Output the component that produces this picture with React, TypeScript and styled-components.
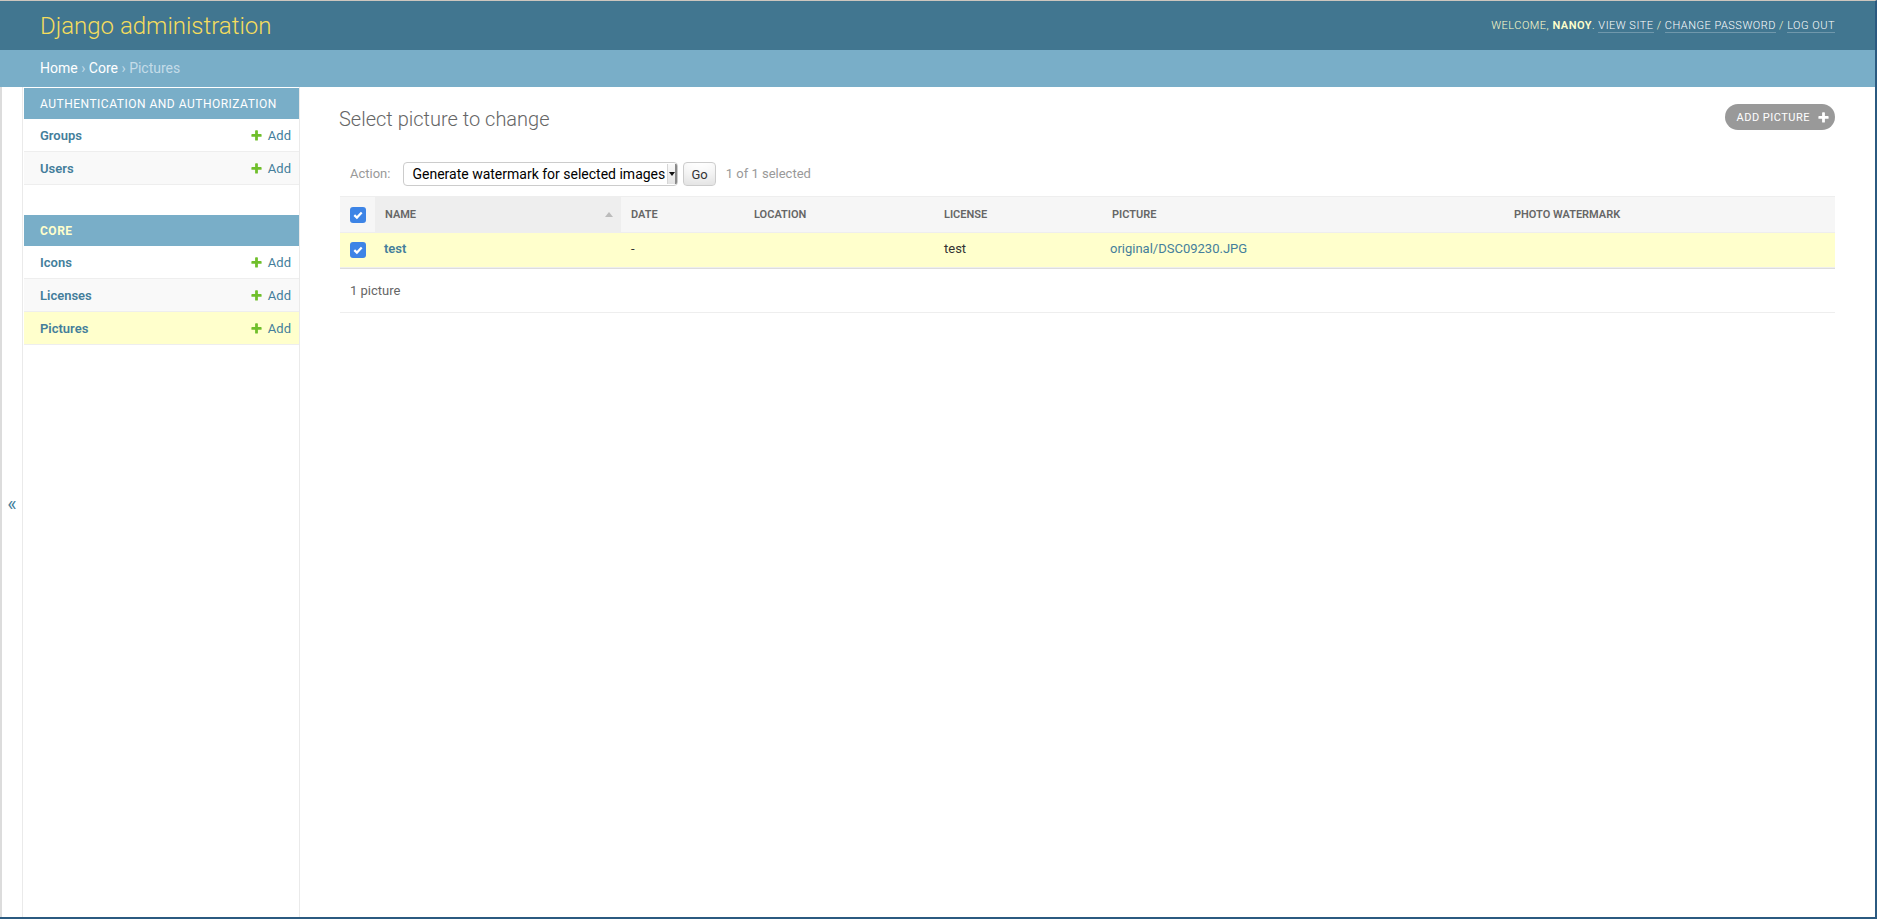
import React from "react";
import styled, { createGlobalStyle } from "styled-components";

const GlobalStyle = createGlobalStyle`
  html, body {
    margin: 0;
    padding: 0;
  }
  body {
    font-family: Roboto, "Lucida Grande", "DejaVu Sans", Verdana, Arial, sans-serif;
    font-size: 14px;
    color: #333;
    background: #fff;
  }
  * {
    box-sizing: border-box;
  }
`;

const Frame = styled.div`
  display: flex;
  flex-direction: column;
  height: 919px;
  border-top: 1px solid #cdc6be;
  border-right: 2px solid #2b5a80;
  border-bottom: 2px solid #2b5a80;
  overflow: hidden;
`;

/* ---------- header ---------- */

const Header = styled.header`
  flex: 0 0 49px;
  display: flex;
  align-items: center;
  justify-content: space-between;
  padding: 0 40px;
  background: #417690;
  color: #ffc;
`;

const Branding = styled.h1`
  margin: 0;
  font-size: 24px;
  font-weight: 300;
  color: #f5dd5d;
`;

const UserTools = styled.div`
  font-size: 11px;
  font-weight: 300;
  letter-spacing: 0.5px;
  text-transform: uppercase;
  text-align: right;
  color: #ffc;
`;

const UserName = styled.strong`
  font-weight: 600;
`;

const ToolLink = styled.a`
  color: #fff;
  text-decoration: none;
  border-bottom: 1px solid rgba(255, 255, 255, 0.25);
`;

const Breadcrumbs = styled.nav`
  flex: 0 0 37px;
  display: flex;
  align-items: center;
  padding: 0 40px 1px;
  background: #79aec8;
  color: #c4dce8;
  font-size: 14px;
  white-space: pre;
`;

const Crumb = styled.a`
  color: #fff;
  text-decoration: none;
`;

/* ---------- main area ---------- */

const Main = styled.div`
  flex: 1;
  display: flex;
  min-height: 0;
`;

const SidebarToggle = styled.button`
  flex: 0 0 23px;
  display: flex;
  align-items: center;
  justify-content: center;
  padding: 4px 0 0;
  border: 0;
  border-left: 2px solid #dcdcdc;
  border-right: 1px solid #eaeaea;
  background: #fff;
  color: #447e9b;
  font-family: inherit;
  font-size: 20px;
`;

const Sidebar = styled.nav`
  flex: 0 0 277px;
  padding: 1px 0 0 1px;
  border-right: 1px solid #eaeaea;
  background: #fff;
`;

const Module = styled.div`
  margin-bottom: 30px;
`;

const ModuleCaption = styled.div<{ $current?: boolean }>`
  padding: 9px 16px 7px;
  line-height: 15px;
  background: #79aec8;
  color: ${(p) => (p.$current ? "#ffc" : "#fff")};
  font-size: 12px;
  font-weight: ${(p) => (p.$current ? 700 : 400)};
  letter-spacing: 0.5px;
  text-transform: uppercase;
`;

const ModelRow = styled.div<{ $alt?: boolean; $current?: boolean }>`
  display: flex;
  align-items: center;
  justify-content: space-between;
  height: 33px;
  padding: 0 8px 0 16px;
  border-bottom: 1px solid #eee;
  background: ${(p) => (p.$current ? "#ffc" : p.$alt ? "#f9f9f9" : "#fff")};
  font-size: 13px;
`;

const ModelName = styled.a`
  color: #447e9b;
  font-weight: 600;
  text-decoration: none;
`;

const AddLink = styled.a`
  display: inline-flex;
  align-items: center;
  gap: 5px;
  color: #447e9b;
  text-decoration: none;
`;

const Content = styled.main`
  flex: 1;
  min-width: 0;
  padding: 20px 40px;
`;

const TitleRow = styled.div`
  display: flex;
  align-items: flex-start;
  justify-content: space-between;
`;

const PageTitle = styled.h1`
  margin: 1px 0 19px -1px;
  line-height: 23px;
  font-size: 20px;
  font-weight: 300;
  color: #666;
`;

const AddButton = styled.a`
  display: inline-flex;
  align-items: center;
  gap: 7px;
  height: 26px;
  margin-top: -3px;
  padding: 0 5px 0 11px;
  border-radius: 15px;
  background: #999;
  color: #fff;
  font-size: 11px;
  letter-spacing: 0.5px;
  text-transform: uppercase;
  text-decoration: none;
`;

/* ---------- changelist ---------- */

const ActionsBar = styled.div`
  display: flex;
  align-items: center;
  padding: 12px 10px 10px;
  line-height: 24px;
  color: #999;
  font-size: 13px;
`;

const ActionSelect = styled.div`
  display: flex;
  align-items: center;
  width: 275px;
  height: 24px;
  margin-left: 13px;
  padding-left: 8px;
  border: 1px solid #ccc;
  border-radius: 4px;
  background: #fff;
  color: #000;
  font-size: 14px;
  overflow: hidden;
`;

const SelectText = styled.span`
  flex: 1;
  white-space: nowrap;
`;

const SelectArrow = styled.span`
  display: flex;
  align-items: center;
  justify-content: center;
  align-self: stretch;
  width: 10px;
  margin: 1px 0;
  border-left: 1px solid #d6d6d6;
  border-right: 2px solid #8a8a8a;
  background: linear-gradient(#fafafa, #e4e4e4);

  &::before {
    content: "";
    border-left: 3px solid transparent;
    border-right: 3px solid transparent;
    border-top: 4px solid #111;
  }
`;

const GoButton = styled.button`
  height: 24px;
  margin-left: 5px;
  padding: 0 7px;
  border: 1px solid #ccc;
  border-radius: 4px;
  background: #fff;
  box-shadow: 0 -15px 20px -10px rgba(0, 0, 0, 0.15) inset;
  color: #333;
  font-family: inherit;
  font-size: 13px;
  line-height: 1;
`;

const Counter = styled.span`
  margin-left: 10px;
`;

const ResultTable = styled.table`
  width: 100%;
  border-collapse: collapse;
  table-layout: fixed;
`;

const HeadCell = styled.th<{ $sorted?: boolean; $width?: number }>`
  width: ${(p) => (p.$width ? `${p.$width}px` : "auto")};
  height: 36px;
  padding: 0 10px;
  border-top: 1px solid #eee;
  border-bottom: 1px solid #eee;
  background: ${(p) => (p.$sorted ? "#eee" : "#f6f6f6")};
  color: #666;
  font-size: 11px;
  font-weight: 600;
  text-align: left;
  text-transform: uppercase;
  white-space: nowrap;
`;

const CheckCell = styled.td<{ $head?: boolean }>`
  width: 35px;
  height: ${(p) => (p.$head ? "36px" : "35px")};
  padding: 0 0 ${(p) => (p.$head ? "0" : "2px")} 1px;
  border-top: ${(p) => (p.$head ? "1px solid #eee" : "none")};
  border-bottom: 1px solid #eee;
  background: ${(p) => (p.$head ? "#f6f6f6" : "#ffc")};
  text-align: center;
  vertical-align: middle;
`;

const SortedLabel = styled.div`
  display: flex;
  align-items: center;
  justify-content: space-between;

  &::after {
    content: "";
    margin-right: -2px;
    border-left: 4px solid transparent;
    border-right: 4px solid transparent;
    border-bottom: 5px solid #bbb;
  }
`;

const SelectedRow = styled.tr`
  background: #ffc;
`;

const BodyCell = styled.td<{ $inset?: number }>`
  height: 35px;
  padding: 0 10px 3px ${(p) => 10 + (p.$inset ?? 0)}px;
  border-bottom: 1px solid #eee;
  font-size: 13px;
  vertical-align: middle;
  white-space: nowrap;
`;

const RowLink = styled.a<{ $bold?: boolean }>`
  color: #447e9b;
  font-weight: ${(p) => (p.$bold ? 600 : 400)};
  text-decoration: none;
`;

const CheckBox = styled.span`
  display: inline-flex;
  align-items: center;
  justify-content: center;
  width: 16px;
  height: 16px;
  border-radius: 3px;
  background: #3d84e6;
  vertical-align: middle;
`;

const Paginator = styled.p`
  margin: 0;
  padding: 11px 10px 10px;
  line-height: 22px;
  border-top: 1px solid #ddd;
  border-bottom: 1px solid #eee;
  color: #666;
  font-size: 13px;
`;

function PlusIcon({ color, size = 13 }: { color: string; size?: number }) {
  return (
    <svg width={size} height={size} viewBox="0 0 1792 1792">
      <path
        fill={color}
        d="M1600 796v192q0 40-28 68t-68 28h-416v416q0 40-28 68t-68 28h-192q-40 0-68-28t-28-68v-416h-416q-40 0-68-28t-28-68v-192q0-40 28-68t68-28h416v-416q0-40 28-68t68-28h192q40 0 68 28t28 68v416h416q40 0 68 28t28 68z"
      />
    </svg>
  );
}

function Checked() {
  return (
    <CheckBox>
      <svg width="12" height="12" viewBox="0 0 12 12">
        <path d="M2.3 6.1 L4.9 8.6 L9.7 3.5" stroke="#fff" strokeWidth="2.2" fill="none" />
      </svg>
    </CheckBox>
  );
}

const apps = [
  {
    name: "Authentication and Authorization",
    models: ["Groups", "Users"],
  },
  {
    name: "Core",
    current: true,
    models: ["Icons", "Licenses", "Pictures"],
  },
];

export default function App() {
  return (
    <>
      <GlobalStyle />
      <Frame>
        <Header>
          <Branding>Django administration</Branding>
          <UserTools>
            Welcome, <UserName>nanoy</UserName>. <ToolLink href="#">View site</ToolLink> /{" "}
            <ToolLink href="#">Change password</ToolLink> / <ToolLink href="#">Log out</ToolLink>
          </UserTools>
        </Header>
        <Breadcrumbs>
          <Crumb href="#">Home</Crumb>
          {" › "}
          <Crumb href="#">Core</Crumb>
          {" › Pictures"}
        </Breadcrumbs>

        <Main>
          <SidebarToggle aria-label="Toggle navigation">«</SidebarToggle>
          <Sidebar>
            {apps.map((app) => (
              <Module key={app.name}>
                <ModuleCaption $current={app.current}>{app.name}</ModuleCaption>
                {app.models.map((model, i) => (
                  <ModelRow key={model} $alt={i % 2 === 1} $current={model === "Pictures"}>
                    <ModelName href="#">{model}</ModelName>
                    <AddLink href="#">
                      <PlusIcon color="#70bf2b" />
                      Add
                    </AddLink>
                  </ModelRow>
                ))}
              </Module>
            ))}
          </Sidebar>

          <Content>
            <TitleRow>
              <PageTitle>Select picture to change</PageTitle>
              <AddButton href="#">
                Add picture
                <PlusIcon color="#fff" />
              </AddButton>
            </TitleRow>

            <ActionsBar>
              <label>Action:</label>
              <ActionSelect>
                <SelectText>Generate watermark for selected images</SelectText>
                <SelectArrow />
              </ActionSelect>
              <GoButton>Go</GoButton>
              <Counter>1 of 1 selected</Counter>
            </ActionsBar>

            <ResultTable>
              <thead>
                <tr>
                  <CheckCell as="th" $head>
                    <Checked />
                  </CheckCell>
                  <HeadCell $sorted $width={246}>
                    <SortedLabel>Name</SortedLabel>
                  </HeadCell>
                  <HeadCell $width={123}>Date</HeadCell>
                  <HeadCell $width={190}>Location</HeadCell>
                  <HeadCell $width={168}>License</HeadCell>
                  <HeadCell $width={402}>Picture</HeadCell>
                  <HeadCell>Photo watermark</HeadCell>
                </tr>
              </thead>
              <tbody>
                <SelectedRow>
                  <CheckCell>
                    <Checked />
                  </CheckCell>
                  <BodyCell $inset={-1}>
                    <RowLink href="#" $bold>
                      test
                    </RowLink>
                  </BodyCell>
                  <BodyCell>-</BodyCell>
                  <BodyCell />
                  <BodyCell>test</BodyCell>
                  <BodyCell $inset={-2}>
                    <RowLink href="#">original/DSC09230.JPG</RowLink>
                  </BodyCell>
                  <BodyCell />
                </SelectedRow>
              </tbody>
            </ResultTable>
            <Paginator>1 picture</Paginator>
          </Content>
        </Main>
      </Frame>
    </>
  );
}
